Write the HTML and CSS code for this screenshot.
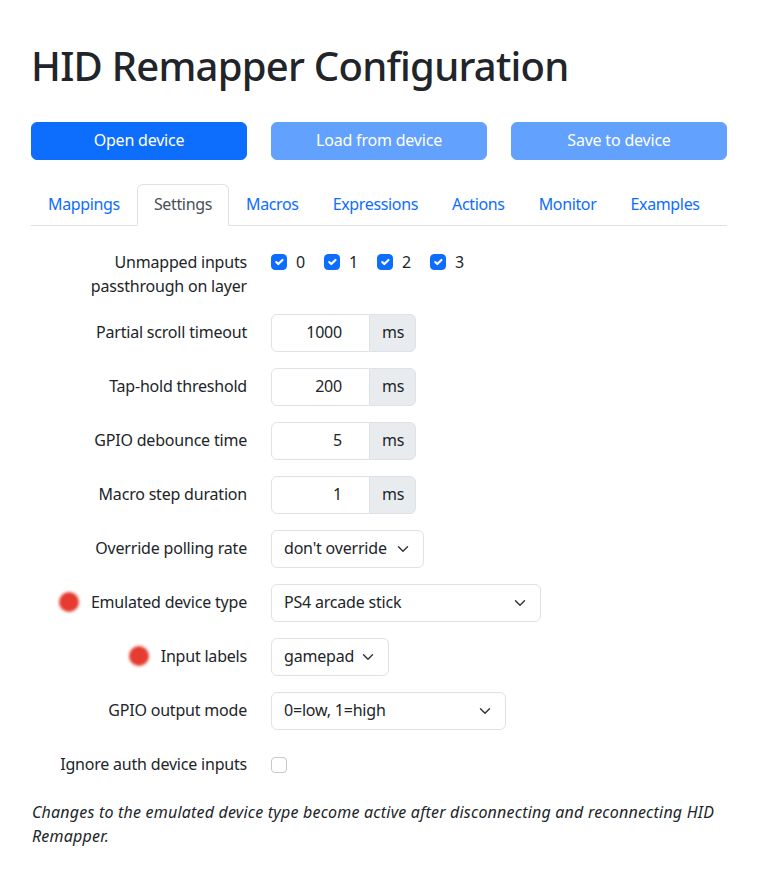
FILE: index.html
```html
<!DOCTYPE html>
<html lang="en">
<head>
<meta charset="utf-8">
<title>HID Remapper Configuration</title>
<link rel="stylesheet" href="styles.css">
</head>
<body>
<div class="page">
  <h1 class="title">HID Remapper Configuration</h1>
  <div class="actions">
    <button class="btn">Open device</button>
    <button class="btn disabled">Load from device</button>
    <button class="btn disabled">Save to device</button>
  </div>
  <ul class="tabs">
    <li class="tab">Mappings</li>
    <li class="tab active">Settings</li>
    <li class="tab">Macros</li>
    <li class="tab">Expressions</li>
    <li class="tab">Actions</li>
    <li class="tab">Monitor</li>
    <li class="tab">Examples</li>
  </ul>
  <div class="settings">
    <div class="row">
      <div class="label plain">Unmapped inputs<br>passthrough on layer</div>
      <div class="checks">
        <label class="check"><span class="box checked"></span>0</label>
        <label class="check"><span class="box checked"></span>1</label>
        <label class="check"><span class="box checked"></span>2</label>
        <label class="check"><span class="box checked"></span>3</label>
      </div>
    </div>
    <div class="row">
      <div class="label">Partial scroll timeout</div>
      <div class="group"><span class="num">1000</span><span class="unit">ms</span></div>
    </div>
    <div class="row">
      <div class="label">Tap-hold threshold</div>
      <div class="group"><span class="num">200</span><span class="unit">ms</span></div>
    </div>
    <div class="row">
      <div class="label">GPIO debounce time</div>
      <div class="group"><span class="num">5</span><span class="unit">ms</span></div>
    </div>
    <div class="row">
      <div class="label">Macro step duration</div>
      <div class="group"><span class="num">1</span><span class="unit">ms</span></div>
    </div>
    <div class="row">
      <div class="label">Override polling rate</div>
      <div class="select sel-poll">don't override</div>
    </div>
    <div class="row">
      <div class="label"><span class="dot"></span>Emulated device type</div>
      <div class="select sel-device">PS4 arcade stick</div>
    </div>
    <div class="row">
      <div class="label"><span class="dot"></span>Input labels</div>
      <div class="select sel-labels">gamepad</div>
    </div>
    <div class="row">
      <div class="label">GPIO output mode</div>
      <div class="select sel-gpio">0=low, 1=high</div>
    </div>
    <div class="row">
      <div class="label">Ignore auth device inputs</div>
      <div class="checks single"><span class="box"></span></div>
    </div>
    <p class="note">Changes to the emulated device type become active after disconnecting and reconnecting HID Remapper.</p>
  </div>
</div>
</body>
</html>
```
FILE: styles.css
```css
* { box-sizing: border-box; }
html, body { margin: 0; padding: 0; background: #fff; }
body {
  font-family: "Noto Sans", "Open Sans", sans-serif;
  font-size: 16px;
  line-height: 24px;
  letter-spacing: -0.2px;
  color: #212529;
}
.page {
  width: 760px;
  padding: 42px 33px 0 31px;
}
.title {
  margin: 0 0 32px;
  font-size: 40px;
  line-height: 48px;
  font-weight: 500;
  letter-spacing: -0.75px;
}
.actions {
  display: grid;
  grid-template-columns: 216px 216px 216px;
  column-gap: 24px;
}
.btn {
  height: 38px;
  border: 1px solid #0d6efd;
  background: #0d6efd;
  color: #fff;
  border-radius: 6px;
  font: inherit;
  letter-spacing: inherit;
  padding: 5px 12px 7px;
}
.btn.disabled {
  background: #62a1fe;
  border-color: #62a1fe;
}
.tabs {
  list-style: none;
  margin: 24px 0 0;
  padding: 0;
  display: flex;
  border-bottom: 1px solid #dee2e6;
}
.tab {
  padding: 7px 16px 9px;
  border: 1px solid transparent;
  border-top-left-radius: 6px;
  border-top-right-radius: 6px;
  margin-bottom: -1px;
  color: #0d6efd;
  letter-spacing: -0.35px;
}
.tab.active {
  color: #495057;
  background: #fff;
  border-color: #dee2e6 #dee2e6 #fff;
}
.settings {
  padding-top: 24px;
}
.row {
  display: grid;
  grid-template-columns: 216px 1fr;
  column-gap: 24px;
  margin-bottom: 16px;
  align-items: start;
}
.label {
  text-align: right;
  padding: 6px 0 8px;
  line-height: 24px;
  white-space: nowrap;
}
.label.plain {
  padding: 0;
}
.checks {
  display: flex;
}
.checks.single { padding-top: 11px; }
.check {
  display: flex;
  align-items: flex-start;
  width: 53px;
}
.box {
  display: inline-block;
  width: 16px;
  height: 16px;
  border: 1px solid #c4c9ce;
  border-radius: 4px;
  background: #fff;
  margin-top: 4px;
  margin-right: 9px;
  flex: none;
}
.checks.single .box { margin-top: 0; }
.box.checked {
  background-color: #0d6efd;
  border-color: #0d6efd;
  background-image: url("data:image/svg+xml,%3csvg xmlns='http://www.w3.org/2000/svg' viewBox='0 0 20 20'%3e%3cpath fill='none' stroke='%23fff' stroke-linecap='round' stroke-linejoin='round' stroke-width='3' d='m6 10 3 3 6-6'/%3e%3c/svg%3e");
  background-size: 100% 100%;
}
.group {
  display: flex;
  height: 38px;
}
.num {
  width: 99px;
  border: 1px solid #dee2e6;
  border-radius: 6px 0 0 6px;
  padding: 5px 27px 7px 12px;
  text-align: right;
}
.unit {
  width: 47px;
  margin-left: -1px;
  border: 1px solid #dee2e6;
  border-radius: 0 6px 6px 0;
  background: #e9ecef;
  padding: 5px 12px 7px;
  text-align: center;
}
.select {
  height: 38px;
  border: 1px solid #dee2e6;
  border-radius: 6px;
  padding: 5px 36px 7px 12px;
  white-space: nowrap;
  background-image: url("data:image/svg+xml,%3csvg xmlns='http://www.w3.org/2000/svg' viewBox='0 0 16 16'%3e%3cpath fill='none' stroke='%23343a40' stroke-linecap='round' stroke-linejoin='round' stroke-width='2' d='m2 5 6 6 6-6'/%3e%3c/svg%3e");
  background-repeat: no-repeat;
  background-position: right 12px center;
  background-size: 16px 12px;
}
.sel-poll { width: 153px; }
.sel-device { width: 270px; }
.sel-labels { width: 118px; }
.sel-gpio { width: 235px; }
.dot {
  display: inline-block;
  width: 20px;
  height: 20px;
  border-radius: 50%;
  background: #e53b30;
  filter: blur(1.5px);
  vertical-align: -4px;
  margin-right: 12px;
}
.note {
  margin: 0;
  font-style: italic;
  letter-spacing: 0.2px;
  padding-left: 1px;
}
```
